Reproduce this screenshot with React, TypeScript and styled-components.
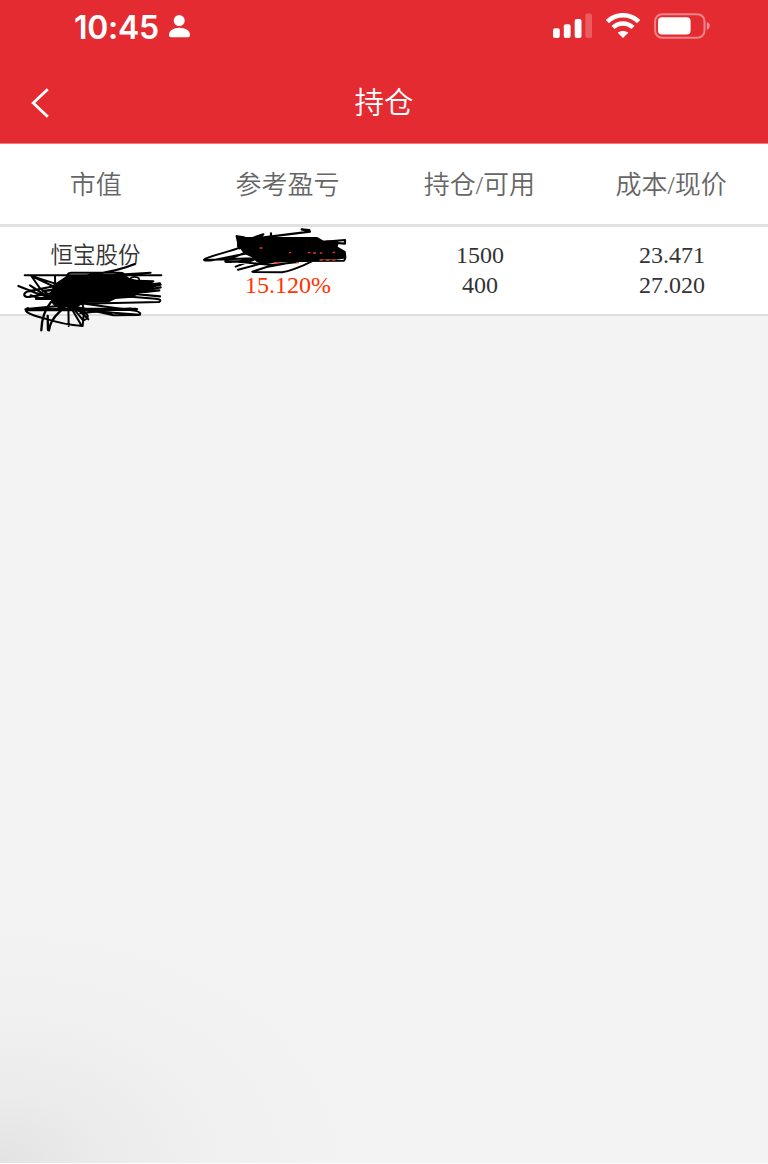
import React from "react";
import styled, { createGlobalStyle } from "styled-components";

const GlobalStyle = createGlobalStyle`
  * { box-sizing: border-box; }
  body { margin: 0; background: #f3f3f3; }
`;

const Screen = styled.main`
  position: relative;
  display: flex;
  flex-direction: column;
  width: 768px;
  height: 1164px;
  overflow: hidden;
  background: radial-gradient(ellipse 350px 235px at 0 100%, #e3e3e3 0%, #ebebeb 28%, #f0f0f0 60%, #f3f3f3 100%) #f3f3f3;
  border-bottom: 1px solid #fbfbfb;
  font-family: "Liberation Serif", "Noto Sans CJK SC", serif;
`;

const StatusBar = styled.div`
  display: flex;
  align-items: center;
  justify-content: space-between;
  height: 60px;
  padding: 0 57px 8px 74px;
  background: #e52b32;
`;

const StatusGroup = styled.div<{ $gap: number }>`
  display: flex;
  align-items: center;
  gap: ${(p) => p.$gap}px;
`;

const Clock = styled.time`
  width: 86px;
  padding-top: 3px;
  color: #fff;
  font: 600 32px/38px Inter, sans-serif;
  letter-spacing: -0.3px;
  white-space: nowrap;
`;

const NavBar = styled.header`
  display: grid;
  grid-template-columns: 100px 1fr 100px;
  align-items: center;
  height: 84px;
  background: #e52b32;
  border-bottom: 1px solid #ee7a7f;
`;

const BackButton = styled.button`
  display: flex;
  width: 100px;
  padding: 2px 0 0 30px;
  border: 0;
  background: none;
`;

const Title = styled.h1`
  margin: 0;
  padding-bottom: 4px;
  color: #fff;
  font-family: "Noto Sans CJK SC", sans-serif;
  font-size: 29.5px;
  font-weight: 350;
  line-height: 44px;
  text-align: center;
`;

const Columns = styled.div`
  display: grid;
  grid-template-columns: repeat(4, 1fr);
  text-align: center;
  background: #fff;
`;

const TableHead = styled(Columns)`
  height: 83px;
  padding: 2px 1px 0 0;
  border-bottom: 3px solid #e1e1e1;
  color: #666;
  font-size: 26px;
  font-weight: 350;
  line-height: 80px;
`;

const HoldingRow = styled(Columns)`
  height: 89px;
  padding-top: 13px;
  border-bottom: 2px solid #dedede;
  color: #333;
  font-size: 24px;
  line-height: 30px;
`;

const Cell = styled.div`
  display: flex;
  flex-direction: column;
`;

const StockName = styled.span`
  height: 32px;
  padding: 1px 1px 0 0;
  font-size: 22.5px;
  font-weight: 350;
`;

const Value = styled.span<{ $gain?: boolean }>`
  display: block;
  height: 30px;
  color: ${(p) => (p.$gain ? "#ff3300" : "inherit")};
`;

const Scribble = styled.svg<{ $left: number }>`
  position: absolute;
  top: 220px;
  left: ${(p) => p.$left}px;
  fill: none;
  stroke: #000;
  stroke-width: 6.5;
  stroke-linecap: round;
  stroke-linejoin: round;
  pointer-events: none;
`;

const PersonIcon = () => (
  <svg width="22" height="24" viewBox="0 0 22 24" fill="#fff">
    <circle cx="10.2" cy="6.6" r="5.5" />
    <path d="M0 21.1C0 16.8 4.4 13.8 10.4 13.8s10.6 3 10.6 7.3c0 1.5-.8 2.2-2.3 2.2H2.3C.8 23.3 0 22.6 0 21.1Z" />
  </svg>
);

const SignalIcon = () => (
  <svg width="39" height="26" viewBox="0 0 39 26" fill="#fff">
    <rect x="0" y="15.3" width="6.8" height="9.7" rx="2" />
    <rect x="10.8" y="11.2" width="6.8" height="13.8" rx="2" />
    <rect x="21.7" y="6" width="6.8" height="19" rx="2" />
    <rect x="32.3" y="0.5" width="6.7" height="24.5" rx="2" opacity=".23" />
  </svg>
);

const WifiIcon = () => (
  <svg width="34" height="26" viewBox="0 0 34 26" fill="none" stroke="#fff" strokeWidth="4.5">
    <path d="M1.4 8.6a22.2 22.2 0 0 1 31.2 0" />
    <path d="M7 14.5a14.3 14.3 0 0 1 20 0" />
    <path d="M17 25.1l-5.3-5.3c3-2.5 7.6-2.5 10.6 0Z" fill="#fff" stroke="none" />
  </svg>
);

const BatteryIcon = () => (
  <svg width="57" height="26" viewBox="0 0 57 26">
    <rect x="1.1" y="1.2" width="49.4" height="23.6" rx="7" fill="none" stroke="#fff" strokeOpacity=".42" strokeWidth="2" />
    <rect x="4" y="4.2" width="32.6" height="17.4" rx="4" fill="#fff" />
    <path d="M52.8 9.1c3.9 1.4 3.9 6.4 0 7.8Z" fill="#fff" fillOpacity=".5" />
  </svg>
);

const BackIcon = () => (
  <svg width="20" height="32" viewBox="0 0 20 32" fill="none" stroke="#fff" strokeWidth="2.8">
    <path d="M17.8 2.2 3.2 16 17.8 29.8" />
  </svg>
);

const MarketValueScribble = () => (
  <Scribble $left={0} width="190" height="120" viewBox="0 0 570 360">
    <path d="M160 198 190 178 205 168 240 172 280 164 330 166 372 166 385 176 410 184 432 188 455 190 458 205 420 216 395 230 345 234 325 244 250 246 225 262 200 258 180 264 160 250 152 220 160 212Z" fill="#000" />
    <path d="M74 166H484M204 172Q198 159 214 158H358Q376 158 371 168M404 132C370 147 320 158 270 164 225 170 190 185 166 200M452 158 350 164 232 180M165 166 166 212M94 168 166 191M94 168 120 205 165 238M104 173 184 210" strokeWidth="6" />
    <path d="M55 198 108 219 170 240M90 196 130 222 210 250M165 198 84 214C66 220 70 234 92 230L178 216 340 180 460 184M92 226 115 234 260 242 482 194M108 237H285L482 202M165 228 480 190M166 245 478 211M182 253 340 216 480 229M156 213 370 188 456 186" />
    <path d="M110 235H200M130 213 200 204" strokeWidth="8" />
    <path d="M120 268H408" strokeWidth="10" />
    <path d="M84 264C66 270 80 282 136 296Q190 314 248 318L252 270 231 190M76 268H410M82 271 230 270 420 284M86 266 245 251 478 246Q488 238 466 236L320 224M220 259 340 286 415 285Q430 280 406 272L232 248M180 251 260 282Q270 294 250 302L208 250M205 250 206 318M208 254 244 316M220 255 265 298" strokeWidth="6" />
    <path d="M124 331Q125 280 153 246L190 222M147 331Q150 302 177 277L204 250M143 288 144 330" strokeWidth="7" />
    <path d="M388 177Q400 166 416 174L421 190M240 280 392 265M270 270 412 267" strokeWidth="5" />
  </Scribble>
);

const ProfitScribble = () => (
  <Scribble $left={190} width="190" height="110" viewBox="0 0 570 330">
    <path d="M146 54 380 54 398 64 442 66 440 82 464 96 466 112 438 116 395 116 350 122 265 124 218 130 202 123 190 110 165 99 153 84 144 78Z" fill="#000" />
    <path d="M140 48 148 85M142 49 162 52M146 68 220 43 202 56M243 40V65M215 53 360 35 335 28 358 30M398 66 465 71V60L410 65" />
    <path d="M156 80C124 96 60 105 42 119Q40 124 76 119L176 99 240 85M47 120 188 115 300 87M171 96 108 121Q98 129 130 125L270 110M137 140 218 109 307 97M144 149 216 130 276 105M187 155 230 141 327 123 462 122Q472 110 450 97L380 80M190 156 276 157Q302 152 340 136L364 125M112 122 245 135 324 126" strokeWidth="6" />
    <path d="M252 128h17M320 128h5M390 120h7M409 120h8M428 120h7M355 98h5M371 99h6M391 99h4M429 97h5M298 98h4M210 84h6" stroke="#e43b16" strokeWidth="4" />
  </Scribble>
);

export default function App() {
  return (
    <Screen>
      <GlobalStyle />
      <StatusBar>
        <StatusGroup $gap={9}>
          <Clock>10:45</Clock>
          <PersonIcon />
        </StatusGroup>
        <StatusGroup $gap={14}>
          <SignalIcon />
          <WifiIcon />
          <BatteryIcon />
        </StatusGroup>
      </StatusBar>
      <NavBar>
        <BackButton aria-label="返回"><BackIcon /></BackButton>
        <Title>持仓</Title>
      </NavBar>
      <TableHead>
        <span>市值</span>
        <span>参考盈亏</span>
        <span>持仓/可用</span>
        <span>成本/现价</span>
      </TableHead>
      <HoldingRow>
        <Cell><StockName>恒宝股份</StockName></Cell>
        <Cell><Value /><Value $gain>15.120%</Value></Cell>
        <Cell><Value>1500</Value><Value>400</Value></Cell>
        <Cell><Value>23.471</Value><Value>27.020</Value></Cell>
      </HoldingRow>
      <MarketValueScribble />
      <ProfitScribble />
    </Screen>
  );
}
